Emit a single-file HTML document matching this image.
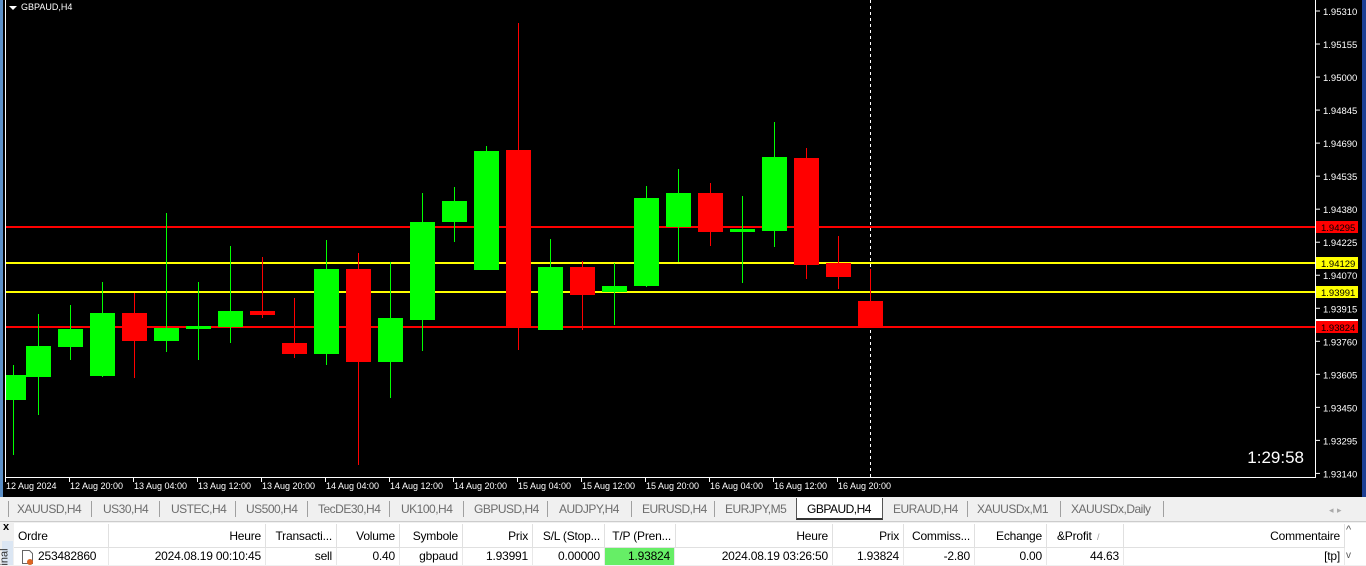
<!DOCTYPE html>
<html><head><meta charset="utf-8"><style>
*{margin:0;padding:0;box-sizing:border-box}
body{width:1366px;height:565px;overflow:hidden;background:#f0f0f0;font-family:"Liberation Sans",sans-serif;position:relative}
.abs{position:absolute}
.tab{position:absolute;top:502px;font-size:12px;color:#6d6d6d;letter-spacing:-0.5px}
.sep{position:absolute;top:501px;width:1px;height:16px;background:#a0a0a0}
.h{position:absolute;top:524px;height:24px;font-size:12px;line-height:24px;color:#000;border-right:1px solid #e0e0e0;padding:0 4px;white-space:nowrap;overflow:hidden;letter-spacing:-0.2px}
.r{position:absolute;top:548px;height:17px;font-size:12px;line-height:17px;color:#000;border-right:1px solid #e8e8e8;padding:0 4px;white-space:nowrap;background:#fff;letter-spacing:-0.2px}
</style></head><body>
<div class="abs" style="left:0;top:0;width:1366px;height:497px;background:#000"></div>
<div class="abs" style="left:0;top:0;width:3px;height:497px;background:#5b8fc7"></div>
<div class="abs" style="left:1362px;top:0;width:4px;height:497px;background:#1c3f94"></div>
<svg class="abs" style="left:0;top:0" width="1366" height="497">
<line x1="5.5" y1="0" x2="5.5" y2="477" stroke="#fff"/>
<line x1="1315.5" y1="0" x2="1315.5" y2="477" stroke="#fff"/>
<line x1="5" y1="477.5" x2="1316" y2="477.5" stroke="#fff"/>
<line x1="870.5" y1="0" x2="870.5" y2="477" stroke="#fff" stroke-dasharray="3,3"/>
<rect x="6" y="226" width="1309" height="2" fill="#f00"/>
<rect x="6" y="262" width="1309" height="2" fill="#ff0"/>
<rect x="6" y="291" width="1309" height="2" fill="#ff0"/>
<rect x="6" y="326" width="1309" height="2" fill="#f00"/>
<g id="c"></g>
<polygon points="9,6 17,6 13,10" fill="#fff"/>
<text x="21" y="10" fill="#fff" font-size="9" font-family="Liberation Sans">GBPAUD,H4</text>
<text x="1304" y="463" fill="#fff" font-size="17" text-anchor="end" font-family="Liberation Sans">1:29:58</text>
<g font-size="9.5" fill="#fff" font-family="Liberation Sans" id="ax"></g>
<g font-size="9" fill="#fff" font-family="Liberation Sans" id="tx"></g>
</svg>
<div class="sep" style="left:8px"></div>
<div class="tab" style="left:17px">XAUUSD,H4</div><div class="sep" style="left:91px"></div>
<div class="tab" style="left:103px">US30,H4</div><div class="sep" style="left:159px"></div>
<div class="tab" style="left:171px">USTEC,H4</div><div class="sep" style="left:235px"></div>
<div class="tab" style="left:246px">US500,H4</div><div class="sep" style="left:307px"></div>
<div class="tab" style="left:318px">TecDE30,H4</div><div class="sep" style="left:389px"></div>
<div class="tab" style="left:401px">UK100,H4</div><div class="sep" style="left:463px"></div>
<div class="tab" style="left:474px">GBPUSD,H4</div><div class="sep" style="left:547px"></div>
<div class="tab" style="left:559px">AUDJPY,H4</div><div class="sep" style="left:631px"></div>
<div class="tab" style="left:642px">EURUSD,H4</div><div class="sep" style="left:714px"></div>
<div class="tab" style="left:725px">EURJPY,M5</div>
<div class="abs" style="left:796px;top:498px;width:87px;height:22px;background:#fff;border:1px solid #555;border-top:none;border-bottom:2px solid #333"></div>
<div class="tab" style="left:807px;color:#000">GBPAUD,H4</div>
<div class="tab" style="left:893px">EURAUD,H4</div><div class="sep" style="left:967px"></div>
<div class="tab" style="left:977px">XAUUSDx,M1</div><div class="sep" style="left:1060px"></div>
<div class="tab" style="left:1071px">XAUUSDx,Daily</div><div class="sep" style="left:1163px"></div>
<div class="tab" style="left:1329px;color:#aaa;font-size:9px;top:505px">◂ &nbsp;▸</div>
<div class="abs" style="left:0;top:521px;width:1366px;height:1px;background:#ccc"></div>
<div class="abs" style="left:0;top:522px;width:14px;height:43px;background:#f0f0f0"></div>
<div class="abs" style="left:3px;top:521px;font-size:11px;font-weight:bold">x</div>
<div class="abs" style="left:2px;top:541px;width:11px;height:24px;background:#dbe6f3"></div>
<div class="abs" style="left:-4px;top:551px;font-size:11px;transform:rotate(-90deg);color:#333">inal</div>
<div class="abs" style="left:14px;top:523px;width:1352px;height:42px;background:#fff"></div>
<div class="h" style="left:14px;width:95px">Ordre</div>
<div class="h" style="left:109px;width:157px;text-align:right">Heure</div>
<div class="h" style="left:266px;width:71px;text-align:right">Transacti...</div>
<div class="h" style="left:337px;width:63px;text-align:right">Volume</div>
<div class="h" style="left:400px;width:63px;text-align:right">Symbole</div>
<div class="h" style="left:463px;width:70px;text-align:right">Prix</div>
<div class="h" style="left:533px;width:72px;text-align:right">S/L (Stop...</div>
<div class="h" style="left:605px;width:71px;text-align:right">T/P (Pren...</div>
<div class="h" style="left:676px;width:157px;text-align:right">Heure</div>
<div class="h" style="left:833px;width:71px;text-align:right">Prix</div>
<div class="h" style="left:904px;width:71px;text-align:right">Commiss...</div>
<div class="h" style="left:975px;width:72px;text-align:right">Echange</div>
<div class="h" style="left:1047px;width:77px;text-align:left;padding-left:10px">&amp;Profit <span style="color:#999;font-size:9px">&nbsp;/</span></div>
<div class="h" style="left:1124px;width:221px;text-align:right">Commentaire</div>
<div class="abs" style="left:14px;top:547px;width:1331px;height:1px;background:#e0e0e0"></div>
<div class="r" style="left:14px;width:95px;padding-left:24px">253482860</div>
<svg class="abs" style="left:21px;top:550px" width="14" height="15"><path d="M1.5 .5h7l3 3v10h-10z" fill="#fff" stroke="#666"/><circle cx="9" cy="12" r="3" fill="#d62"/></svg>
<div class="r" style="left:109px;width:157px;text-align:right">2024.08.19 00:10:45</div>
<div class="r" style="left:266px;width:71px;text-align:right">sell</div>
<div class="r" style="left:337px;width:63px;text-align:right">0.40</div>
<div class="r" style="left:400px;width:63px;text-align:right">gbpaud</div>
<div class="r" style="left:463px;width:70px;text-align:right">1.93991</div>
<div class="r" style="left:533px;width:72px;text-align:right">0.00000</div>
<div class="r" style="left:605px;width:70px;text-align:right;background:#66ee66">1.93824</div>
<div class="r" style="left:676px;width:157px;text-align:right">2024.08.19 03:26:50</div>
<div class="r" style="left:833px;width:71px;text-align:right">1.93824</div>
<div class="r" style="left:904px;width:71px;text-align:right">-2.80</div>
<div class="r" style="left:975px;width:72px;text-align:right">0.00</div>
<div class="r" style="left:1047px;width:77px;text-align:right">44.63</div>
<div class="r" style="left:1124px;width:221px;text-align:right">[tp]</div>
<div class="abs" style="left:1346px;top:524px;font-size:11px;color:#555">^</div>
<div class="abs" style="left:1346px;top:550px;font-size:10px;color:#555">v</div>
<script>
var NS="http://www.w3.org/2000/svg";
function el(p,t,a,txt){var e=document.createElementNS(NS,t);for(var k in a)e.setAttribute(k,a[k]);if(txt)e.textContent=txt;p.appendChild(e);return e;}
var c=document.getElementById('c');
var d=[[13,'g',375,400,365,455],[38,'g',346,377,314,415],[70,'g',329,347,305,360],[102,'g',313,376,282,377],[134,'r',313,341,293,378],[166,'g',328,341,213,352],[198,'g',326,329,282,360],[230,'g',311,327,246,343],[262,'r',311,315,257,318],[294,'r',343,354,298,358],[326,'g',269,354,240,365],[358,'r',269,362,253,465],[390,'g',318,362,262,398],[422,'g',222,320,193,351],[454,'g',201,222,187,242],[486,'g',151,270,146,270],[518,'r',150,328,23,350],[550,'g',267,330,239,330],[582,'r',267,295,261,330],[614,'g',286,292,263,325],[646,'g',198,286,186,287],[678,'g',193,227,169,262],[710,'r',193,232,183,246],[742,'g',229,232,196,283],[774,'g',157,231,122,247],[806,'r',158,265,148,279],[838,'r',263,277,236,289],[870,'r',301,326,269,326]];
d.forEach(function(k){var col=k[1]=='g'?'#00ff00':'#ff0000';var x=k[0]+0.5;
el(c,'line',{x1:x,x2:x,y1:k[4],y2:k[5],stroke:col});
var l=k[0]-12,w=25;if(l<6){w-=6-l;l=6;}
el(c,'rect',{x:l,y:k[2],width:w,height:Math.max(2,k[3]-k[2]),fill:col});});
var ax=document.getElementById('ax');
for(var i=0;i<15;i++){var p=1.95310-i*0.00155;var y=11+i*33.03;
el(ax,'line',{x1:1316,x2:1320,y1:y,y2:y,stroke:'#fff'});
el(ax,'text',{x:1323,y:y+4},p.toFixed(5));}
[[227,'1.94295','#f00','#000'],[263,'1.94129','#ff0','#000'],[292,'1.93991','#ff0','#000'],[327,'1.93824','#f00','#000']].forEach(function(m){
el(ax,'rect',{x:1316,y:m[0]-6,width:42,height:12,fill:m[2]});el(ax,'text',{x:1321,y:m[0]+4,fill:m[3]},m[1]);});
el(ax,'rect',{x:1316,y:319,width:42,height:2,fill:'#fff'});
var tx=document.getElementById('tx');
var labs=['12 Aug 2024','12 Aug 20:00','13 Aug 04:00','13 Aug 12:00','13 Aug 20:00','14 Aug 04:00','14 Aug 12:00','14 Aug 20:00','15 Aug 04:00','15 Aug 12:00','15 Aug 20:00','16 Aug 04:00','16 Aug 12:00','16 Aug 20:00'];
labs.forEach(function(s,i){var x=5+i*64;el(tx,'line',{x1:x+0.5,x2:x+0.5,y1:477,y2:482,stroke:'#fff'});el(tx,'text',{x:x+1,y:489},s);});
</script>
</body></html>
